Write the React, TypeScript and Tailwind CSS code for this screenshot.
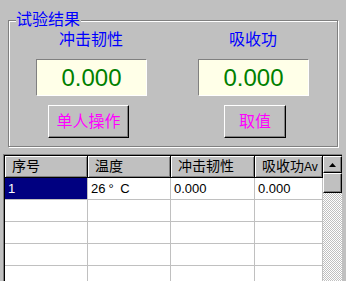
import React from "react";

const cols = [
  { w: "w-[83px]", title: <>序号</> },
  { w: "w-[83px]", title: <>温度</> },
  { w: "w-[84px]", title: <>冲击韧性</> },
  {
    w: "w-[68px]",
    title: (
      <>
        吸收功<span className="text-[12px]">Av</span>
      </>
    ),
  },
];

const rows: React.ReactNode[][] = [
  [
    "1",
    <>
      26<span className="mx-[3px]">°</span> C
    </>,
    "0.000",
    "0.000",
  ],
  ["", "", "", ""],
  ["", "", "", ""],
  ["", "", "", ""],
  ["", "", "", ""],
];

function ValueBox({ value }: { value: string }) {
  return (
    <div className="flex h-[36px] w-[110px] items-center justify-center border-l border-t border-[#808080] bg-[#ffffe8] shadow-[1px_1px_0_#fff] font-['Liberation_Sans',sans-serif] text-[24px] text-[#008000]">
      {value}
    </div>
  );
}

function Raised({ className, children }: { className: string; children: React.ReactNode }) {
  return (
    <div
      className={`flex h-[33px] items-center justify-center border-b border-l border-r border-t border-b-black border-l-white border-r-black border-t-white bg-[#c0c0c0] shadow-[inset_-1px_-1px_0_#808080] text-[16px] text-[#ff00ff] ${className}`}
    >
      {children}
    </div>
  );
}

export default function App() {
  return (
    <div className="h-[281px] w-[346px] overflow-hidden bg-[#c0c0c0] pt-[20px] font-['Liberation_Sans','Noto_Sans_CJK_SC',sans-serif]">
      {/* group box */}
      <div className="relative ml-[8px] h-[127px] w-[330px] border border-[#808080] shadow-[1px_1px_0_#fff,inset_1px_1px_0_#fff]">
        <div className="absolute left-[7px] top-[-10px] bg-[#c0c0c0] pr-px text-[16px] leading-[18px] text-[#0000ff]">
          试验结果
        </div>
        <div className="flex gap-[52px] pl-[27px] pt-[9px]">
          <div className="flex w-[110px] flex-col">
            <div className="h-[20px] text-center text-[16px] leading-[20px] text-[#0000ff]">冲击韧性</div>
            <div className="mt-[9px]">
              <ValueBox value="0.000" />
            </div>
            <Raised className="ml-[12px] mt-[10px] w-[81px]">单人操作</Raised>
          </div>
          <div className="flex w-[110px] flex-col">
            <div className="h-[20px] text-center text-[16px] leading-[20px] text-[#0000ff]">吸收功</div>
            <div className="mt-[9px]">
              <ValueBox value="0.000" />
            </div>
            <Raised className="ml-[26px] mt-[10px] w-[62px]">取值</Raised>
          </div>
        </div>
      </div>

      {/* grid */}
      <div className="ml-[3px] mt-[7px] flex w-[339px] border-l border-t border-[#808080] bg-white shadow-[inset_1px_1px_0_#000] pl-px pt-px">
        <div className="flex flex-col">
          <div className="flex">
            {cols.map((c, i) => (
              <div
                key={i}
                className={`${c.w} h-[22px] overflow-hidden whitespace-nowrap border-b border-r border-black bg-[#c0c0c0] pl-[7px] text-[14px] leading-[21px] text-black shadow-[inset_1px_1px_0_#fff,inset_-1px_-1px_0_#808080] ${i === 2 ? "pl-[2px]" : ""} ${i === 3 ? "pl-[1px]" : ""}`}
              >
                {c.title}
              </div>
            ))}
          </div>
          {rows.map((r, ri) => (
            <div key={ri} className="flex">
              {r.map((v, ci) => (
                <div
                  key={ci}
                  className={`${cols[ci].w} h-[22px] whitespace-nowrap border-b border-r border-[#c0c0c0] pl-[3px] text-[13px] leading-[21px] ${
                    ri === 0 && ci === 0 ? "bg-[#000080] text-white" : "text-black"
                  }`}
                >
                  {v}
                </div>
              ))}
            </div>
          ))}
        </div>
        {/* scrollbar */}
        <div className="flex w-[19px] flex-col bg-[repeating-conic-gradient(#c0c0c0_0_25%,#fff_0_50%)] bg-[length:2px_2px]">
          <div className="flex h-[17px] items-center justify-center border-l border-t border-l-white border-t-white border-b border-r border-b-black border-r-black bg-[#c0c0c0] shadow-[inset_-1px_-1px_0_#808080]">
            <svg width="7" height="4" viewBox="0 0 7 4">
              <path d="M3.5 0 L7 4 L0 4 Z" fill="#000" />
            </svg>
          </div>
          <div className="h-[20px] border-l border-t border-l-white border-t-white border-b border-r border-b-black border-r-black bg-[#c0c0c0] shadow-[inset_-1px_-1px_0_#808080]" />
        </div>
      </div>
    </div>
  );
}
